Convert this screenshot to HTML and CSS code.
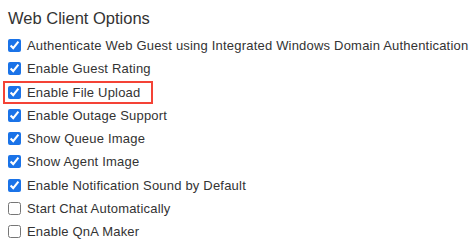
FILE: index.html
```html
<!DOCTYPE html>
<html lang="en">
<head>
    <meta charset="UTF-8">
    <title>Web Client Options</title>
    <link rel="stylesheet" href="styles.css">
</head>
<body>

<div class="options">
    <h2>Web Client Options</h2>
    <label class="option"><input type="checkbox" checked> Authenticate Web Guest using Integrated Windows Domain Authentication</label>
    <label class="option"><input type="checkbox" checked> Enable Guest Rating</label>
    <label class="option highlight"><input type="checkbox" checked> Enable File Upload</label>
    <label class="option"><input type="checkbox" checked> Enable Outage Support</label>
    <label class="option"><input type="checkbox" checked> Show Queue Image</label>
    <label class="option"><input type="checkbox" checked> Show Agent Image</label>
    <label class="option"><input type="checkbox" checked> Enable Notification Sound by Default</label>
    <label class="option"><input type="checkbox"> Start Chat Automatically</label>
    <label class="option"><input type="checkbox"> Enable QnA Maker</label>
</div>

</body>
</html>
```

FILE: styles.css
```css
body {
    font-family: 'Liberation Sans', Arial, sans-serif;
    margin: 0;
    padding: 0;
    background: #fff;
    color: #333;
}
.options {
    padding: 7px 0 0 8px;
}
.options h2 {
    font-size: 16.5px;
    font-weight: normal;
    margin: 0 0 5px;
    line-height: 22px;
}
.option {
    display: flex;
    align-items: center;
    height: 23.25px;
    font-size: 13px;
    letter-spacing: 0.2px;
    white-space: nowrap;
}
.option input {
    width: 13px;
    height: 13px;
    margin: 0 6px 0 0;
    accent-color: #1a73e8;
}
.highlight {
    box-sizing: border-box;
    width: 150px;
    margin-left: -5px;
    padding-left: 3px;
    border: 2px solid #f44336;
}
```
